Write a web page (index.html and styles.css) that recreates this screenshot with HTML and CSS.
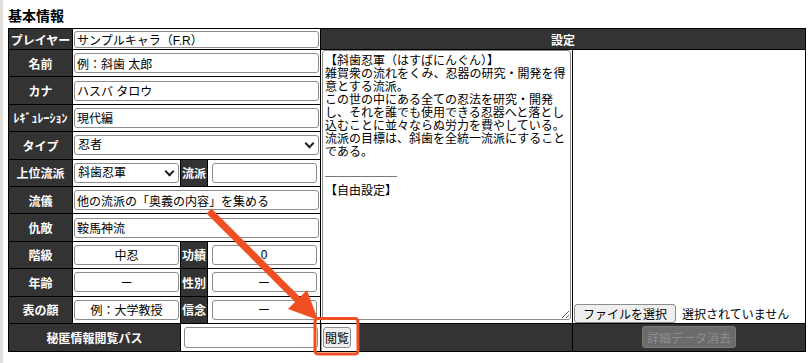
FILE: index.html
```html
<!DOCTYPE html>
<html lang="ja">
	<head>
		<meta charset="UTF-8" />
		<meta name="viewport" content="width=device-width, initial-scale=1.0" />
		<title>基本情報</title>
		<link rel="stylesheet" href="styles.css">
	</head>
	<body>
		<div class="sheet">
			<h2 class="ttl">基本情報</h2>
			<table class="base">
				<colgroup>
					<col class="c1"><col class="c2"><col class="c3"><col class="c4"><col class="c5"><col class="c6">
				</colgroup>
				<tr class="top">
					<th>プレイヤー</th>
					<td colspan="3"><input class="txt" value="サンプルキャラ（F.R）"></td>
					<th colspan="2">設定</th>
				</tr>
				<tr>
					<th>名前</th>
					<td colspan="3"><input class="txt" value="例：斜歯 太郎"></td>
					<td rowspan="10" class="memo">
						<textarea>【斜歯忍軍（はすばにんぐん）】
雑賀衆の流れをくみ、忍器の研究・開発を得意とする流派。
この世の中にある全ての忍法を研究・開発し、それを誰でも使用できる忍器へと落とし込むことに並々ならぬ労力を費やしている。
流派の目標は、斜歯を全統一流派にすることである。

──────
【自由設定】</textarea>
					</td>
					<td rowspan="10" class="file">
						<button class="btn">ファイルを選択</button><span class="nofile">選択されていません</span>
					</td>
				</tr>
				<tr>
					<th>カナ</th>
					<td colspan="3"><input class="txt" value="ハスバ タロウ"></td>
				</tr>
				<tr>
					<th>ﾚｷﾞｭﾚｰｼｮﾝ</th>
					<td colspan="3"><input class="txt" value="現代編"></td>
				</tr>
				<tr>
					<th>タイプ</th>
					<td colspan="3">
						<span class="sel"><select><option>忍者</option></select></span>
					</td>
				</tr>
				<tr>
					<th>上位流派</th>
					<td><span class="sel sm"><select><option>斜歯忍軍</option></select></span></td>
					<th>流派</th>
					<td><input class="txt sm" value=""></td>
				</tr>
				<tr>
					<th>流儀</th>
					<td colspan="3"><input class="txt" value="他の流派の「奥義の内容」を集める"></td>
				</tr>
				<tr>
					<th>仇敵</th>
					<td colspan="3"><input class="txt" value="鞍馬神流"></td>
				</tr>
				<tr>
					<th>階級</th>
					<td><input class="txt sm cen" value="中忍"></td>
					<th>功績</th>
					<td><input class="txt sm cen" value="0"></td>
				</tr>
				<tr>
					<th>年齢</th>
					<td><input class="txt sm cen" value="ー"></td>
					<th>性別</th>
					<td><input class="txt sm cen" value="ー"></td>
				</tr>
				<tr>
					<th>表の顔</th>
					<td><input class="txt sm cen" value="例：大学教授"></td>
					<th>信念</th>
					<td><input class="txt sm cen" value="ー"></td>
				</tr>
				<tr class="foot">
					<th colspan="2">秘匿情報閲覧パス</th>
					<td colspan="2"><input class="txt pass" type="password"></td>
					<td class="view"><button class="btn look">閲覧</button></td>
					<td class="dark"><button class="btn" disabled>詳細データ消去</button></td>
				</tr>
			</table>
		</div>
		<!-- 注釈 -->
		<svg class="mark" width="811" height="363" viewBox="0 0 811 363">
			<line x1="209" y1="211" x2="298" y2="300" stroke="#f04e23" stroke-width="7" />
			<polygon points="318,320 288,309 307,290" fill="#f04e23" />
			<rect x="315" y="318.5" width="43" height="35.5" rx="3" fill="none" stroke="#f04e23" stroke-width="3" />
		</svg>
	</body>
</html>
```

FILE: styles.css
```css
* {
	margin: 0;
	padding: 0;
	box-sizing: border-box;
}
body {
	position: relative;
	font-family: 'Liberation Sans', 'Noto Sans CJK JP', sans-serif;
	color: #000;
	background: #fff;
}
.sheet {
	min-height: 363px;
	border-left: 3px solid #e2ded9;
	padding: 6px 6px 0 5px;
}
.ttl {
	font-size: 14px;
	font-weight: bold;
	line-height: 20px;
	margin-bottom: 2px;
}

/* 表 */
.base {
	width: 797px;
	border-collapse: collapse;
	table-layout: fixed;
}
.c1 { width: 64px; }
.c2 { width: 108px; }
.c3 { width: 27px; }
.c4 { width: 113px; }
.c5 { width: 252px; }
.c6 { width: 233px; }
.base tr {
	height: 27.4px;
}
.base tr.top {
	height: 21px;
}
.base tr.foot {
	height: 28px;
}
.base th,
.base td {
	border: 1px solid #000;
	padding: 0 1px;
}
.base th {
	padding: 0;
	background: #333;
	color: #fff;
	font-size: 12px;
	font-weight: bold;
	text-align: center;
	white-space: nowrap;
}

/* 入力欄 */
.txt,
.sel select {
	display: block;
	width: 100%;
	height: 20px;
	border: 1px solid #8d8d8d;
	border-radius: 3px;
	padding: 0 2px;
	background: #fff;
	color: #000;
	font: 12px 'Liberation Sans', 'Noto Sans CJK JP', sans-serif;
	outline: none;
}
.top .txt {
	height: 17px;
}
.sm {
	width: 105px;
	margin: 0 auto;
}
.sel {
	position: relative;
	display: block;
}
.sel select {
	appearance: none;
	padding-left: 3px;
}
.sel::after {
	content: '';
	position: absolute;
	right: 6px;
	top: 5px;
	width: 5px;
	height: 5px;
	border-right: 2px solid #222;
	border-bottom: 2px solid #222;
	transform: rotate(45deg);
}
.cen {
	text-align: center;
}
.pass {
	width: 134px;
	height: 21px;
	margin: 0 auto;
}

/* 設定 */
.memo {
	vertical-align: top;
	padding-top: 2px;
}
.memo textarea {
	display: block;
	width: 100%;
	height: 270px;
	border: 1px solid #8d8d8d;
	border-radius: 3px;
	padding: 2px;
	font: 12px/13px 'Noto Sans CJK JP', sans-serif;
	color: #000;
	resize: both;
	outline: none;
}
.file {
	vertical-align: bottom;
	padding: 0 0 4px 1px;
	font-size: 12px;
}
.nofile {
	margin-left: 6px;
}

/* ボタン */
.btn {
	height: 19px;
	padding: 0 8px;
	border: 1px solid #8d8d8d;
	border-radius: 3px;
	background: #efefef;
	color: #000;
	font: 12px 'Noto Sans CJK JP', sans-serif;
}
.view {
	background: linear-gradient(to right, #fff 36px, #333 36px);
}
.look {
	height: 21px;
	padding: 0 1px;
	margin-left: 1px;
}
.dark {
	background: #333;
	text-align: center;
}
.btn[disabled] {
	height: 22px;
	padding: 0 4px;
	background: #6b6b6b;
	border-color: #7a7a7a;
	color: #8e8e8e;
}

/* 注釈 */
.mark {
	position: absolute;
	left: 0;
	top: 0;
	pointer-events: none;
}
```
